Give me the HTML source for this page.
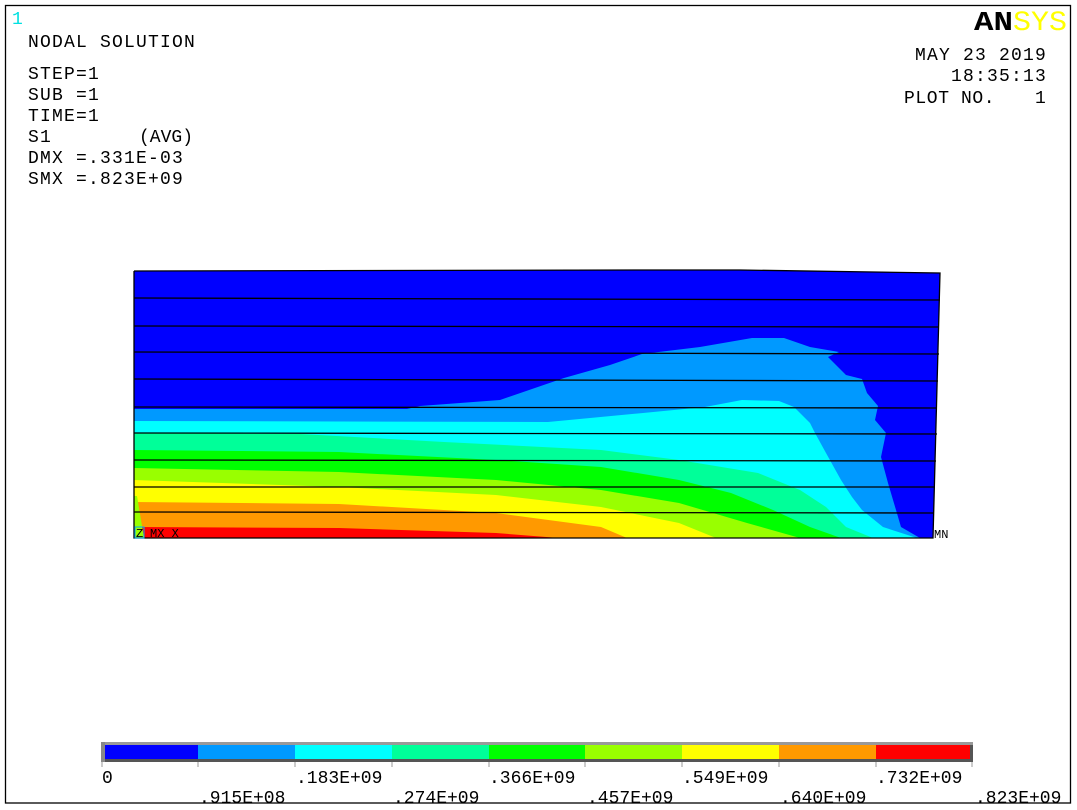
<!DOCTYPE html>
<html><head><meta charset="utf-8"><style>
html,body{margin:0;padding:0;background:#fff;width:1077px;height:810px;overflow:hidden}
svg{display:block}
text{font-family:"Liberation Mono",monospace;white-space:pre}
</style></head><body>
<svg width="1077" height="810" viewBox="0 0 1077 810" xmlns="http://www.w3.org/2000/svg" xml:space="preserve">
<rect x="5.5" y="5.5" width="1065" height="797.5" fill="#fff" stroke="#000" stroke-width="1.3"/>
<text x="12" y="24" font-size="18" fill="#00e0e0">1</text>
<g font-size="18" fill="#000" letter-spacing="1.2">
<text x="28" y="47">NODAL SOLUTION</text>
<text x="28" y="79">STEP=1</text>
<text x="28" y="100">SUB =1</text>
<text x="28" y="121">TIME=1</text>
<text x="28" y="142">S1</text>
<text x="139" y="142" letter-spacing="0">(AVG)</text>
<text x="28" y="163">DMX =.331E-03</text>
<text x="28" y="184">SMX =.823E+09</text>
<text x="1047" y="60" text-anchor="end">MAY 23 2019</text>
<text x="1047" y="81" text-anchor="end">18:35:13</text>
<text x="904" y="103" letter-spacing="0.6">PLOT NO.</text>
<text x="1047" y="103" text-anchor="end">1</text>
</g>
<text x="974" y="30" font-family="Liberation Sans,sans-serif" font-weight="bold" font-size="27" fill="#000" textLength="39" lengthAdjust="spacingAndGlyphs">AN</text>
<text x="1013" y="30" font-family="Liberation Serif,serif" font-size="28" fill="#ffff00" textLength="54" lengthAdjust="spacingAndGlyphs">SYS</text>

<clipPath id="m"><polygon points="134,271 640,270 740,270 940,273 933,538 134,538"/></clipPath>
<g clip-path="url(#m)">
<rect x="130" y="265" width="820" height="280" fill="#0000ff"/>
<polygon fill="#0099ff" points="134,409 407,409 420,406 500,400 564,378 610,365 642,354 700,347 752,338 784,338 810,347 839,352 828,357 846,375 862,379 867,393 878,406 875,420 886,433 881,457 888,483 896,510 901,527 920,538 134,538"/>
<polygon fill="#00ffff" points="134,421 548,422 643,413 705,407 742,400 779,401 794,407 810,423 815,433 826,453 841,480 852,497 862,510 883,527 917,538 134,538"/>
<polygon fill="#00ff99" points="134,433 300,434 444,442 601,450 679,460 758,473 800,490 826,507 846,527 873,538 134,538"/>
<polygon fill="#00ff00" points="134,450 339,452 496,460 601,467 679,480 731,493 773,510 810,527 841,538 134,538"/>
<polygon fill="#99ff00" points="134,468 339,472 496,480 601,490 679,503 747,523 800,538 134,538"/>
<polygon fill="#ffff00" points="134,480 339,487 496,495 601,507 679,523 716,538 134,538"/>
<polygon fill="#ff9900" points="134,502 339,504 496,513 601,527 627,538 134,538"/>
<polygon fill="#ff0000" points="134,527 339,528 496,533 559,538 134,538"/>
<polygon fill="#99ff00" points="134,496 137,496 144,538 134,538"/>
</g>
<g stroke="#000" stroke-width="1.3" fill="none">
<polyline points="134,271 640,270 740,270 940,273 933,538 134,538 134,271"/>
<line x1="134" y1="298" x2="940" y2="300"/>
<line x1="134" y1="326" x2="939" y2="327"/>
<line x1="134" y1="352" x2="939" y2="354"/>
<line x1="134" y1="379" x2="938" y2="381"/>
<line x1="134" y1="407" x2="937" y2="408"/>
<line x1="134" y1="433" x2="937" y2="434"/>
<line x1="134" y1="460" x2="936" y2="461"/>
<line x1="134" y1="487" x2="935" y2="487"/>
<line x1="134" y1="512" x2="934" y2="513"/>
</g>
<rect x="135" y="527" width="9" height="11" fill="none" stroke="#00aaff" stroke-width="1"/>
<text x="136" y="537" font-size="12" fill="#000">Z</text>
<text x="150" y="537" font-size="12" fill="#000">MX X</text>
<text x="934" y="538" font-size="12" fill="#000">MN</text>

<rect x="101" y="742" width="872" height="20" fill="#555"/>
<rect x="101" y="742" width="872" height="3" fill="#999"/>
<rect x="101" y="742" width="4" height="20" fill="#888"/>
<rect x="105" y="745" width="93" height="14" fill="#0000ff"/>
<rect x="198" y="745" width="97" height="14" fill="#0099ff"/>
<rect x="295" y="745" width="97" height="14" fill="#00ffff"/>
<rect x="392" y="745" width="97" height="14" fill="#00ff99"/>
<rect x="489" y="745" width="96" height="14" fill="#00ff00"/>
<rect x="585" y="745" width="97" height="14" fill="#99ff00"/>
<rect x="682" y="745" width="97" height="14" fill="#ffff00"/>
<rect x="779" y="745" width="97" height="14" fill="#ff9900"/>
<rect x="876" y="745" width="94" height="14" fill="#ff0000"/>
<g stroke="#999" stroke-width="1">
<line x1="102" y1="762" x2="102" y2="767"/><line x1="198" y1="762" x2="198" y2="767"/><line x1="295" y1="762" x2="295" y2="767"/><line x1="392" y1="762" x2="392" y2="767"/><line x1="489" y1="762" x2="489" y2="767"/><line x1="585" y1="762" x2="585" y2="767"/><line x1="682" y1="762" x2="682" y2="767"/><line x1="779" y1="762" x2="779" y2="767"/><line x1="876" y1="762" x2="876" y2="767"/><line x1="972" y1="762" x2="972" y2="767"/>
</g>
<g font-size="18" fill="#000">
<text x="102" y="783">0</text>
<text x="296" y="783">.183E+09</text>
<text x="489" y="783">.366E+09</text>
<text x="682" y="783">.549E+09</text>
<text x="876" y="783">.732E+09</text>
<text x="199" y="803">.915E+08</text>
<text x="393" y="803">.274E+09</text>
<text x="587" y="803">.457E+09</text>
<text x="780" y="803">.640E+09</text>
<text x="975" y="803">.823E+09</text>
</g>
</svg>
</body></html>
